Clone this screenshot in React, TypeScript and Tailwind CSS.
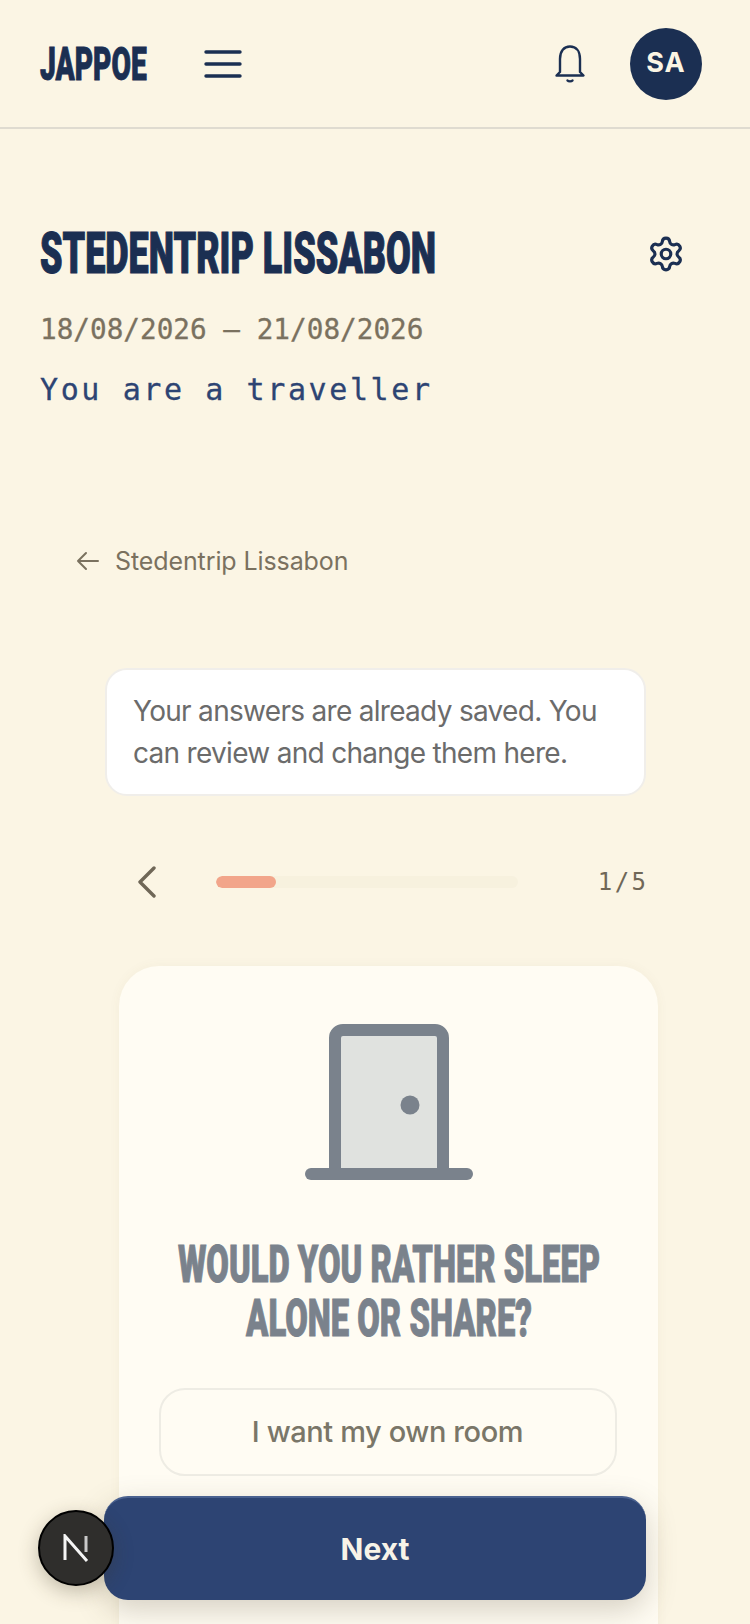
import { Settings } from 'lucide-react';

const displayFont = "font-['Roboto','Liberation_Sans',sans-serif]";
const monoFont = "font-['DejaVu_Sans_Mono',monospace]";

const DoorIcon = () => (
  <svg width="168" height="156" viewBox="0 0 168 156" fill="none">
    <rect x="30" y="6" width="108" height="144" fill="#e0e2df" />
    <path d="M30 150V14a8 8 0 0 1 8-8h92a8 8 0 0 1 8 8v136" stroke="#7a828c" strokeWidth="12" />
    <path d="M6 150h156" stroke="#7a828c" strokeWidth="12" strokeLinecap="round" />
    <circle cx="105" cy="81" r="9.5" fill="#7a828c" />
  </svg>
);

const BellIcon = () => (
  <svg width="34" height="38" viewBox="0 0 34 38" fill="none" stroke="#1b2f52" strokeWidth="2.4" strokeLinecap="round" strokeLinejoin="round">
    <path d="M7 27V14C7 6 11 1.5 17 1.5S27 6 27 14v13l3.5 3.5h-27z" />
    <path d="M14.5 35.5c1 1.2 4 1.2 5 0" />
  </svg>
);

const MenuIcon = () => (
  <svg width="38" height="28" viewBox="0 0 38 28" stroke="#1b2f52" strokeWidth="3.4" strokeLinecap="round">
    <path d="M2 2h34M2 14h34M2 26h34" />
  </svg>
);

export default function App() {
  return (
    <div className="relative h-[1624px] w-[750px] overflow-hidden bg-[#fbf5e4] font-['Inter',sans-serif]">
      {/* Header */}
      <header className="flex h-[129px] items-center justify-between border-b-2 border-[#dfdbd0] pl-10 pr-12">
        <div className="flex items-center gap-[57px]">
          <span className={`${displayFont} block w-[107px] origin-left scale-x-[0.6] whitespace-nowrap text-[47px] leading-none font-black text-[#1b2f52] [-webkit-text-stroke:1px_#1b2f52]`}>
            JAPPOE
          </span>
          <MenuIcon />
        </div>
        <div className="flex items-center gap-[43px]">
          <BellIcon />
          <div className="flex h-[72px] w-[72px] items-center justify-center rounded-full bg-[#1b2f52] text-[27px] font-bold tracking-[1px] text-[#fbf5e4]">
            SA
          </div>
        </div>
      </header>

      {/* Trip title */}
      <section className="flex justify-between pl-10 pr-[65px] pt-[94px]">
        <div className="w-[560px]">
          <h1 className={`${displayFont} origin-left scale-x-[0.62] whitespace-nowrap text-[58px] leading-[60px] font-black text-[#1b2f52] [-webkit-text-stroke:1.2px_#1b2f52]`}>
            STEDENTRIP LISSABON
          </h1>
          <p className={`${monoFont} mt-[27px] text-[27.7px] leading-[40px] text-[#7a715f] [-webkit-text-stroke:0.3px_#7a715f]`}>18/08/2026 – 21/08/2026</p>
          <p className={`${monoFont} mt-[20px] text-[30px] leading-[40px] tracking-[2.6px] text-[#2d4473] [-webkit-text-stroke:0.3px_#2d4473]`}>You are a traveller</p>
        </div>
        <Settings size={38} strokeWidth={2} className="mt-[12px] text-[#1b2f52]" />
      </section>

      {/* Back link */}
      <div className="mt-[133px] flex items-center gap-[15px] pl-[76px] text-[#7a715f]">
        <svg width="24" height="20" viewBox="0 0 24 20" fill="none" stroke="currentColor" strokeWidth="2" strokeLinecap="round" strokeLinejoin="round">
          <path d="M22 10H2M10 2l-8 8 8 8" />
        </svg>
        <span className="text-[25px] leading-[36px] tracking-[-0.1px]">Stedentrip Lissabon</span>
      </div>

      {/* Saved notice */}
      <div className="ml-[105px] mt-[89px] w-[541px] rounded-[22px] border-2 border-[#f0eeea] bg-white px-[26px] py-[20px] text-[28px] leading-[42px] tracking-[-0.7px] text-[#6b6b6b]">
        Your answers are already saved. You can review and change them here.
      </div>

      {/* Progress */}
      <div className="ml-[137px] mt-[70px] flex w-[509px] items-center">
        <svg width="20" height="32" viewBox="0 0 20 32" fill="none" stroke="#6f6757" strokeWidth="3.4" strokeLinecap="round" strokeLinejoin="round">
          <path d="M17 2 3 16l14 14" />
        </svg>
        <div className="ml-[59px] h-3 w-[302px] overflow-hidden rounded-full bg-[#f7f1de]">
          <div className="h-full w-[60px] rounded-full bg-[#f2a58a]" />
        </div>
        <span className={`${monoFont} ml-auto text-[24px] leading-[32px] [word-spacing:-12px] text-[#6f6757]`}>1 / 5</span>
      </div>

      {/* Question card */}
      <div className="ml-[119px] mt-[68px] flex h-[700px] w-[539px] flex-col items-center rounded-t-[40px] bg-[#fffcf3] px-10 pt-[58px] shadow-[0_0_12px_rgba(120,100,60,0.05)]">
        <DoorIcon />
        <h2 className={`${displayFont} mt-[58px] w-[720px] shrink-0 scale-x-[0.63] whitespace-nowrap text-center text-[52px] leading-[54px] font-black text-[#7a828c] [-webkit-text-stroke:1px_#7a828c]`}>
          WOULD YOU RATHER SLEEP
          <br />
          ALONE OR SHARE?
        </h2>
        <button className="mr-[2px] mt-[42px] flex h-[88px] w-[458px] shrink-0 items-center justify-center rounded-[26px] border-2 border-[#eeece4] text-[29px] font-medium tracking-[-0.4px] text-[#7a7668]">
          I want my own room
        </button>
      </div>

      {/* Next button */}
      <button className="absolute left-[104px] top-[1496px] h-[104px] w-[542px] rounded-[24px] border-t-2 border-[#4a618f] bg-[#2d4473] text-[30px] font-bold text-[#f7f3e8] shadow-[0_10px_30px_rgba(90,80,50,0.25)]">
        Next
      </button>

      {/* Next.js dev badge */}
      <div className="absolute left-[38px] top-[1510px] flex h-[76px] w-[76px] items-center justify-center rounded-full border-2 border-black bg-[#2f2e2c] shadow-[0_6px_20px_rgba(60,50,30,0.3)]">
        <svg width="26" height="28" viewBox="0 0 26 28" fill="none">
          <path d="M2 26V2l22 25" stroke="#f5f5f5" strokeWidth="3" />
          <path d="M23 2v16" stroke="#c9c9c9" strokeWidth="3" />
        </svg>
      </div>
    </div>
  );
}
